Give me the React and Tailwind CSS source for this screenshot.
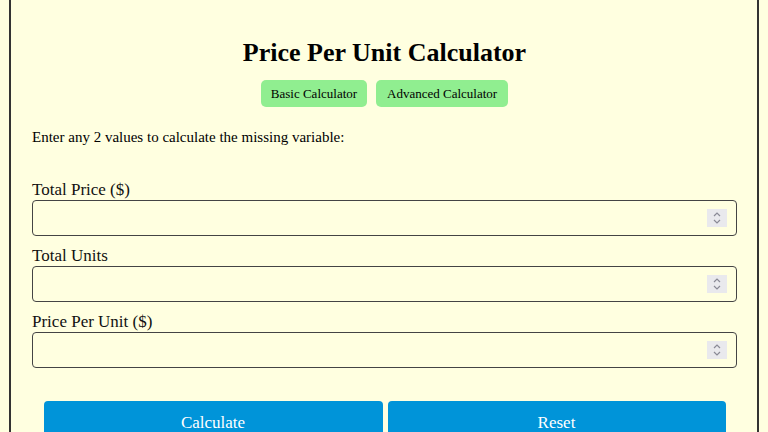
import React from "react";

function Spinner() {
  return (
    <div className="flex h-[18px] w-[20px] flex-col items-center justify-center bg-[#e9e9ed]">
      <svg width="8" height="14" viewBox="0 0 8 14" fill="none" stroke="#8a8a96" strokeWidth="1.2">
        <path d="M1 5 L4 2 L7 5" />
        <path d="M1 9 L4 12 L7 9" />
      </svg>
    </div>
  );
}

function Field({ label }) {
  return (
    <div className="flex flex-col">
      <label className="text-[17px] leading-[20px] text-[#111]">{label}</label>
      <div className="flex h-[36px] items-center rounded-[4px] border border-[#444] pr-[9px]">
        <input type="text" className="h-full flex-1 bg-transparent px-2 outline-none" />
        <Spinner />
      </div>
    </div>
  );
}

export default function App() {
  return (
    <div className="min-h-[432px] bg-[#ffffe0] px-[9px] font-['Liberation_Serif',serif] text-black">
      <div className="border-x-2 border-[#333] pl-[21px] pr-[20px] pt-[38px] pb-[40px]">
        <h1 className="text-center text-[26px] font-bold leading-[30px]">Price Per Unit Calculator</h1>
        <div className="mt-[12px] flex justify-center gap-[9px]">
          <button className="h-[27px] rounded-[5px] bg-[#90ee90] px-[10px] text-[13px]">Basic Calculator</button>
          <button className="h-[27px] rounded-[5px] bg-[#90ee90] px-[11px] text-[13px]">Advanced Calculator</button>
        </div>
        <p className="mt-[21px] text-[15px] leading-[18px]">Enter any 2 values to calculate the missing variable:</p>
        <div className="mt-[34px] flex flex-col gap-[10px]">
          <Field label="Total Price ($)" />
          <Field label="Total Units" />
          <Field label="Price Per Unit ($)" />
        </div>
        <div className="mt-[33px] flex justify-center gap-[5px]">
          <button className="h-[40px] w-[339px] rounded-[4px] bg-[#0094d9] pt-[3px] text-[17px] text-white">Calculate</button>
          <button className="h-[40px] w-[338px] rounded-[4px] bg-[#0094d9] pt-[3px] text-[17px] text-white">Reset</button>
        </div>
      </div>
    </div>
  );
}
